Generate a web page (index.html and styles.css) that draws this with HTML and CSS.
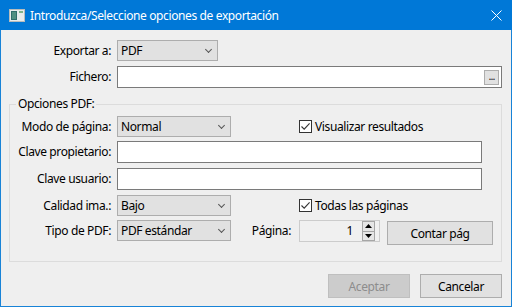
FILE: index.html
```html
<!DOCTYPE html>
<html lang="es">
<head>
<meta charset="utf-8">
<title>Exportar</title>
<link rel="stylesheet" href="styles.css">
</head>
<body>
<div class="window">
  <div class="titlebar">
    <svg class="app-icon" width="16" height="13" viewBox="0 0 16 13">
      <rect x="0.5" y="0.5" width="15" height="12" fill="#e8ecec" stroke="#b8bcbc"/>
      <rect x="2" y="2" width="6" height="9" fill="#2f6d6a"/>
      <rect x="3" y="3" width="4" height="7" fill="#4f8f80"/>
      <rect x="10" y="2" width="4" height="2" fill="#7fb38a"/>
    </svg>
    <span class="title">Introduzca/Seleccione opciones de exportación</span>
    <svg class="close" width="11" height="11" viewBox="0 0 11 11">
      <path d="M0.5 0.5 L10.5 10.5 M10.5 0.5 L0.5 10.5" stroke="#fff" stroke-width="1"/>
    </svg>
  </div>
  <div class="content">
    <div class="top-form">
      <label class="lbl">Exportar a:</label>
      <div class="combo combo-short"><span>PDF</span><i class="chev"></i></div>
      <label class="lbl">Fichero:</label>
      <div class="textbox file-box"><span class="browse">...</span></div>
    </div>
    <fieldset class="group">
      <legend>Opciones PDF:</legend>
      <div class="group-grid">
        <label class="lbl">Modo de página:</label>
        <div class="combo"><span>Normal</span><i class="chev"></i></div>
        <div class="check c-span"><span class="box"><svg width="11" height="11" viewBox="0 0 11 11"><path d="M1.5 5.5 L4.2 8.2 L9.6 2.4" fill="none" stroke="#333" stroke-width="1.1"/></svg></span>Visualizar resultados</div>

        <label class="lbl">Clave propietario:</label>
        <div class="textbox wide"></div>

        <label class="lbl">Clave usuario:</label>
        <div class="textbox wide"></div>

        <label class="lbl">Calidad ima.:</label>
        <div class="combo"><span>Bajo</span><i class="chev"></i></div>
        <div class="check c-span"><span class="box"><svg width="11" height="11" viewBox="0 0 11 11"><path d="M1.5 5.5 L4.2 8.2 L9.6 2.4" fill="none" stroke="#333" stroke-width="1.1"/></svg></span>Todas las páginas</div>

        <label class="lbl">Tipo de PDF:</label>
        <div class="combo"><span>PDF estándar</span><i class="chev"></i></div>
        <label class="lbl page-lbl">Página:</label>
        <div class="spinner"><span class="val">1</span>
          <span class="spin-btns">
            <span class="sb"><svg width="7" height="4" viewBox="0 0 7 4"><path d="M0 4 L3.5 0 L7 4Z" fill="#000"/></svg></span>
            <span class="sb"><svg width="7" height="4" viewBox="0 0 7 4"><path d="M0 0 L3.5 4 L7 0Z" fill="#000"/></svg></span>
          </span>
        </div>
        <button class="btn count-btn">Contar pág</button>
      </div>
    </fieldset>
    <div class="actions">
      <button class="btn disabled">Aceptar</button>
      <button class="btn">Cancelar</button>
    </div>
  </div>
</div>
</body>
</html>
```
FILE: styles.css
```css
* { box-sizing: border-box; }
html, body { margin: 0; padding: 0; }
body {
  font-family: "Noto Sans", "Open Sans", sans-serif;
  font-size: 12px;
  letter-spacing: -0.38px;
  color: #000;
  background: #f0f0f0;
}
.window {
  width: 512px;
  height: 307px;
  border: 1px solid #1883d7;
  border-top: none;
  background: #efefef;
  display: flex;
  flex-direction: column;
}
.titlebar {
  height: 30px;
  margin: 0 -1px;
  background: #0078d7;
  color: #fff;
  display: flex;
  align-items: center;
  padding-left: 9px;
}
.app-icon { margin-top: 1px; }
.title { margin-left: 5px; font-size: 12px; }
.close { margin-left: auto; margin-right: 10px; }

.content { flex: 1; display: flex; flex-direction: column; }

.top-form {
  display: grid;
  grid-template-columns: 116px 385px;
  grid-template-rows: 26px 22px;
  align-items: start;
  margin-top: 10px;
}
.lbl {
  text-align: right;
  padding-right: 6px;
  line-height: 21px;
  white-space: nowrap;
}
.combo {
  height: 21px;
  width: 114px;
  background: #e1e1e1;
  border: 1px solid #adadad;
  display: flex;
  align-items: center;
  padding-left: 3px;
  padding-right: 6px;
}
.combo span { flex: 1; line-height: 19px; }
.combo-short { width: 101px; }
.chev {
  width: 5px; height: 5px;
  border-right: 1px solid #555;
  border-bottom: 1px solid #555;
  transform: rotate(45deg);
  margin-top: -3px;
}
.textbox {
  height: 22px;
  background: #fff;
  border: 1px solid #7a7a7a;
}
.file-box {
  display: flex;
  justify-content: flex-end;
  align-items: center;
  padding-right: 2px;
}
.browse {
  width: 15px; height: 15px;
  background: #e1e1e1;
  border: 1px solid #adadad;
  font-size: 11px;
  line-height: 9px;
  text-align: center;
  letter-spacing: -1px;
  color: #222;
}

.group {
  margin: 8px 9px 0 8px;
  padding: 0;
  border: 1px solid #dcdcdc;
  min-width: 0;
}
.group legend {
  margin-left: 6px;
  padding: 0 2px;
  line-height: 16px;
}
.group-grid {
  display: grid;
  grid-template-columns: 107px 114px 68px 81px 113px;
  grid-template-rows: 25px 27px 27px 25px 25px;
  align-items: start;
  margin-top: 4px;
  margin-bottom: 16px;
}
.wide { grid-column: 2 / 6; width: 365px; }
.c-span { grid-column: 4 / 6; }
.check {
  display: flex;
  align-items: center;
  height: 21px;
  white-space: nowrap;
}
.check .box {
  width: 13px; height: 13px;
  border: 1px solid #333;
  background: #fff;
  margin-right: 3px;
  display: flex;
  align-items: center;
  justify-content: center;
}
.page-lbl { padding-right: 8px; line-height: 22px; }
.spinner {
  height: 22px;
  background: #f0f0f0;
  border: 1px solid #cccccc;
  display: flex;
  align-items: center;
  justify-content: flex-end;
  padding-right: 4px;
}
.val { margin-right: 9px; line-height: 20px; }
.spin-btns {
  display: flex;
  flex-direction: column;
  width: 13px;
  height: 20px;
  border: 1px solid #a6a6a6;
  background: #e6e6e6;
}
.sb {
  flex: 1;
  display: flex;
  align-items: center;
  justify-content: center;
}
.sb + .sb { border-top: 1px solid #a6a6a6; }

.btn {
  font: inherit;
  letter-spacing: inherit;
  color: #000;
  height: 24px;
  background: #e1e1e1;
  border: 1px solid #adadad;
  padding: 0;
}
.count-btn { width: 106px; margin-left: 7px; margin-top: 1px; }

.actions {
  display: flex;
  justify-content: flex-end;
  gap: 10px;
  margin-top: 12px;
  padding-right: 9px;
}
.actions .btn { width: 82px; }
.btn.disabled {
  background: #cccccc;
  border-color: #bfbfbf;
  color: #8d8d8d;
}
```
